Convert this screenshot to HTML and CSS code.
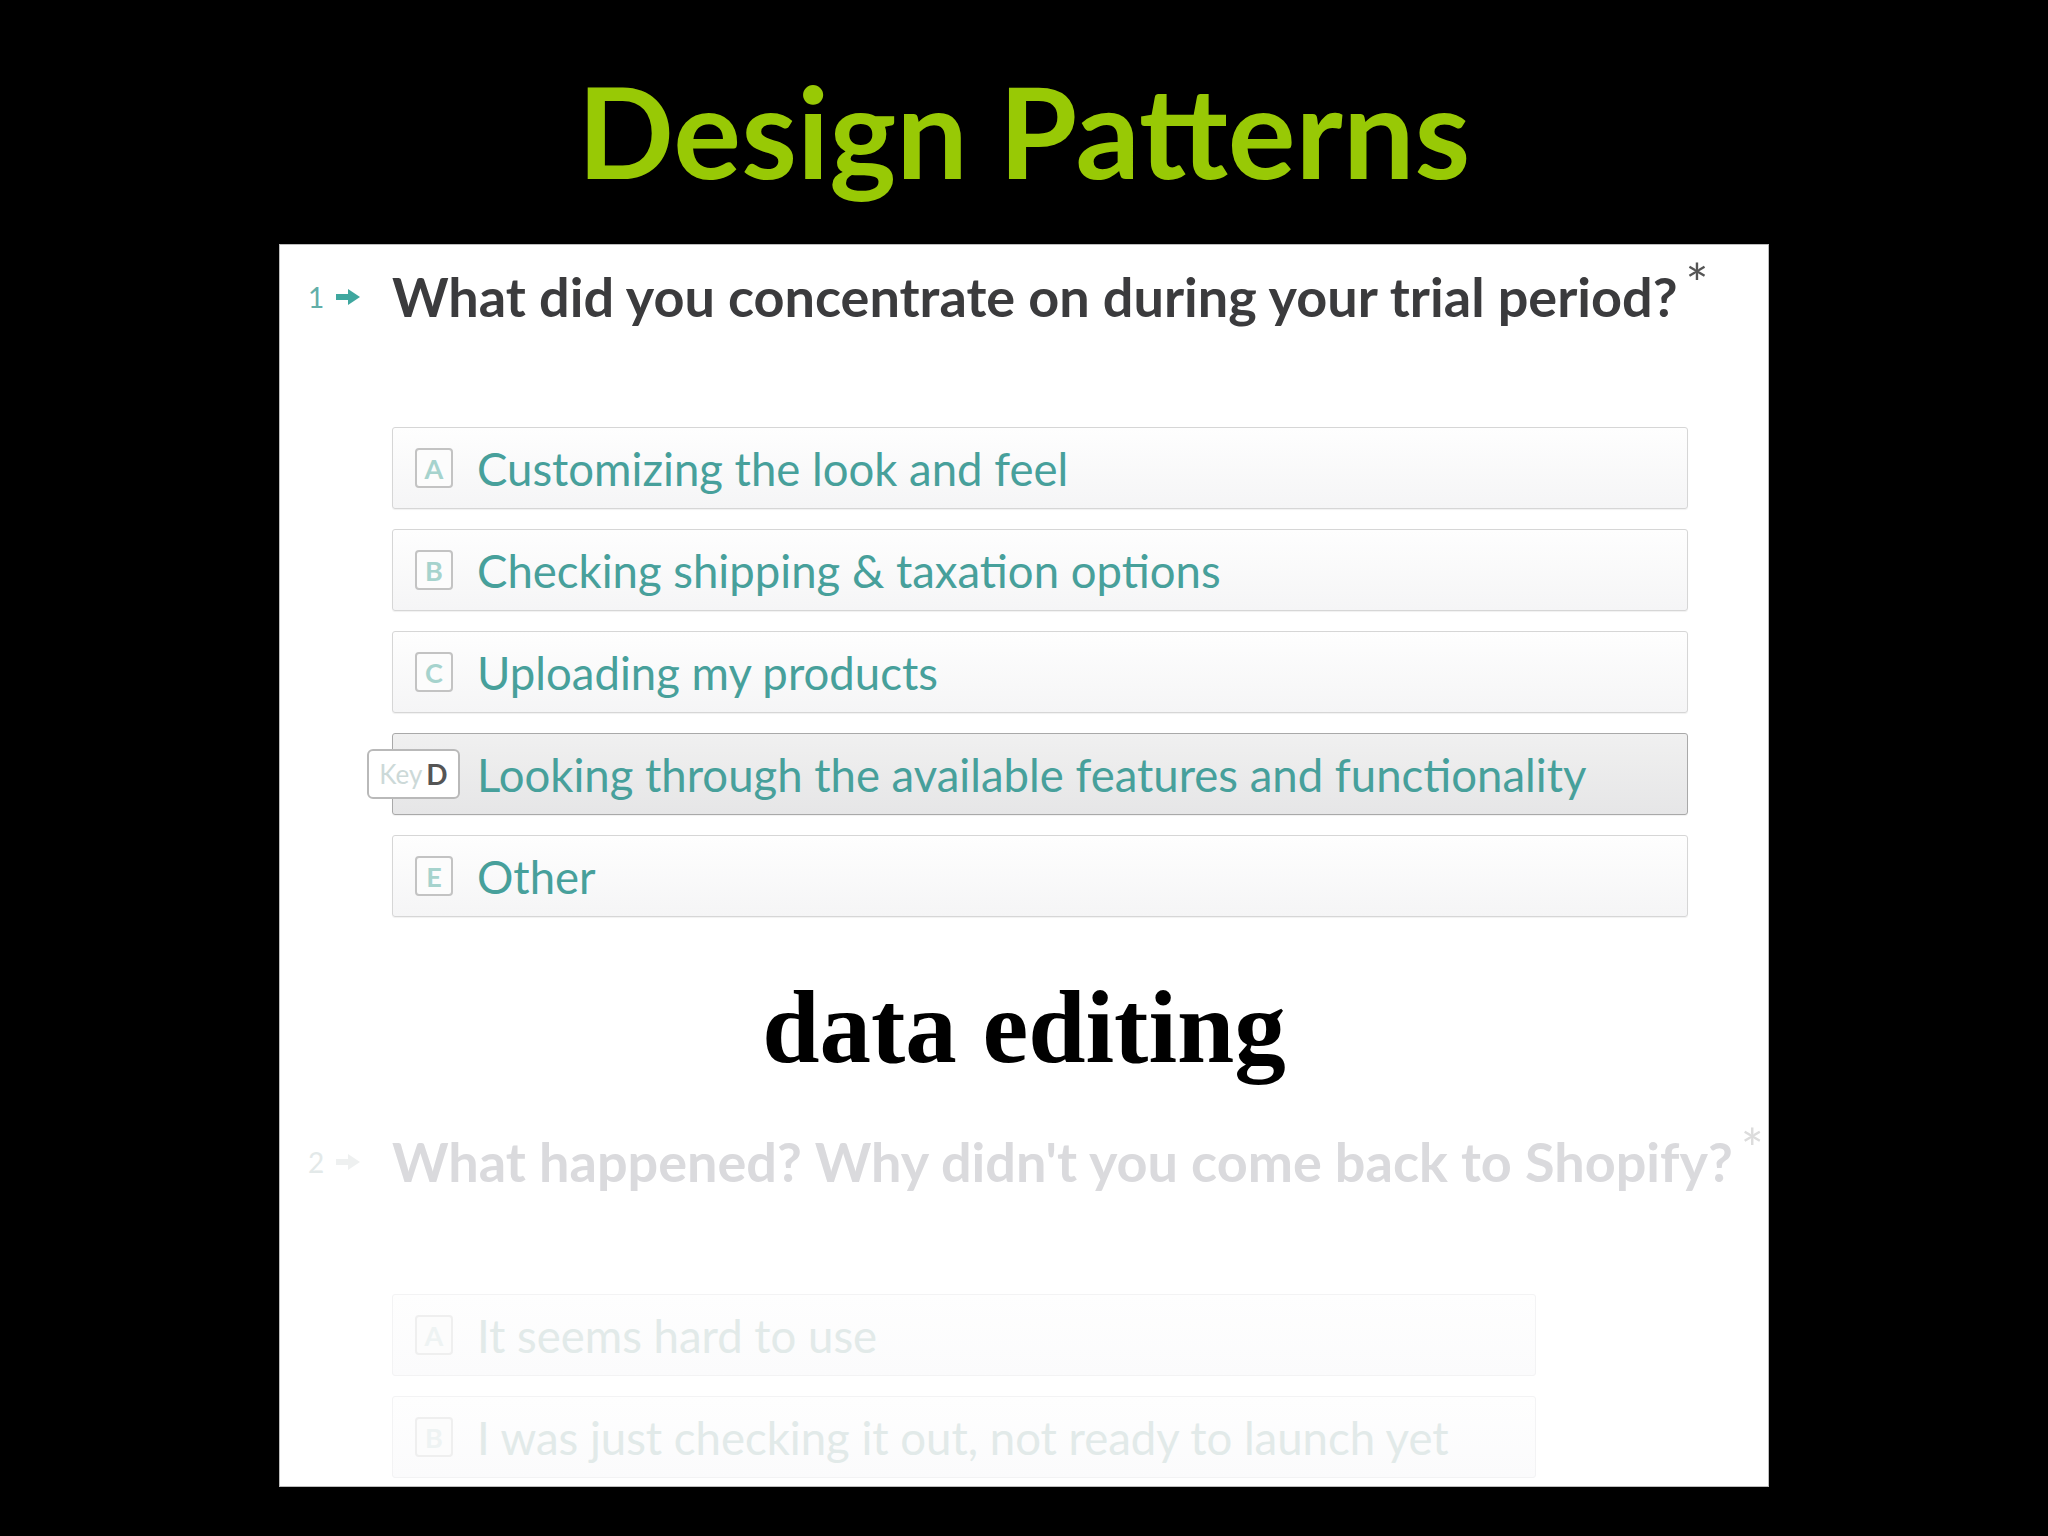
FILE: index.html
```html
<!DOCTYPE html>
<html lang="en">
<head>
<meta charset="utf-8">
<title>Design Patterns</title>
<link rel="stylesheet" href="styles.css">
</head>
<body>
<div class="slide">
  <h1 class="title">Design Patterns</h1>
  <div class="panel">
    <section class="question">
      <div class="q-head">
        <span class="q-num">1</span>
        <svg class="q-arrow" viewBox="0 0 24 16" width="24" height="16"><path d="M0 5h12V0l12 8-12 8v-5H0z"/></svg>
        <h2 class="q-text">What did you concentrate on during your trial period?<span class="req">*</span></h2>
      </div>
      <ul class="options options-wide">
        <li class="opt"><span class="key">A</span><span class="label">Customizing the look and feel</span></li>
        <li class="opt"><span class="key">B</span><span class="label">Checking shipping &amp; taxation options</span></li>
        <li class="opt"><span class="key">C</span><span class="label">Uploading my products</span></li>
        <li class="opt opt-active"><span class="key key-hint"><span class="key-word">Key</span><span class="key-letter">D</span></span><span class="label">Looking through the available features and functionality</span></li>
        <li class="opt"><span class="key">E</span><span class="label">Other</span></li>
      </ul>
    </section>
    <p class="caption">data editing</p>
    <section class="question faded">
      <div class="q-head">
        <span class="q-num">2</span>
        <svg class="q-arrow" viewBox="0 0 24 16" width="24" height="16"><path d="M0 5h12V0l12 8-12 8v-5H0z"/></svg>
        <h2 class="q-text">What happened? Why didn't you come back to Shopify?<span class="req">*</span></h2>
      </div>
      <ul class="options options-narrow">
        <li class="opt"><span class="key">A</span><span class="label">It seems hard to use</span></li>
        <li class="opt"><span class="key">B</span><span class="label">I was just checking it out, not ready to launch yet</span></li>
      </ul>
    </section>
  </div>
</div>
</body>
</html>
```

FILE: styles.css
```css
* { box-sizing: border-box; }

html, body {
  margin: 0;
  padding: 0;
  background: #000;
}

.slide {
  width: 2048px;
  height: 1536px;
  background: #000;
  display: flex;
  flex-direction: column;
  align-items: center;
  overflow: hidden;
}

.title {
  margin: 54px 0 0;
  font-family: Lato, "Open Sans", sans-serif;
  font-weight: 700;
  font-size: 127px;
  line-height: 152px;
  color: #98c905;
}

.panel {
  margin-top: 38px;
  width: 1490px;
  height: 1243px;
  background: #fff;
  border: 1px solid #bdbdbd;
  overflow: hidden;
  padding: 17px 0 0 28px;
  display: flex;
  flex-direction: column;
}

.question {
  display: flex;
  flex-direction: column;
}

.q-head {
  display: flex;
  align-items: center;
  height: 70px;
}

.q-num {
  flex: none;
  font-family: Lato, sans-serif;
  font-size: 28px;
  color: #62aea8;
  width: 28px;
}

.q-arrow {
  flex: none;
  width: 24px;
  height: 16px;
  fill: #3fa79f;
  margin-right: 32px;
}

.q-text {
  margin: 0;
  font-family: Lato, sans-serif;
  font-weight: 700;
  font-size: 54px;
  line-height: 70px;
  color: #3b3b3d;
  white-space: nowrap;
}

.req {
  font-weight: 400;
  font-size: 54px;
  color: #555;
  margin-left: 8px;
  position: relative;
  top: -14px;
}

.options {
  list-style: none;
  margin: 95px 0 0 84px;
  padding: 0;
  display: flex;
  flex-direction: column;
  gap: 20px;
}

.options-wide { width: 1296px; }
.options-narrow { width: 1144px; }

.opt {
  height: 82px;
  border: 1px solid #d6d6d6;
  border-radius: 3px;
  background: linear-gradient(#fefefe, #f5f5f6);
  box-shadow: 0 1px 1px rgba(0,0,0,0.06);
  display: flex;
  align-items: center;
  padding-left: 22px;
}

.opt-active {
  background: linear-gradient(#f0f0f0, #e6e6e7);
  border-color: #a9a9a9;
}

.key {
  width: 38px;
  height: 40px;
  flex: none;
  border: 2px solid #c3c3c3;
  border-radius: 4px;
  background: #fcfcfc;
  display: flex;
  align-items: center;
  justify-content: center;
  font-family: Lato, sans-serif;
  font-weight: 700;
  font-size: 27px;
  color: #a6d3cd;
  margin-right: 24px;
}

.key-hint {
  width: 93px;
  height: 50px;
  margin-left: -48px;
  margin-right: 17px;
  border: 2px solid #b9b9b9;
  border-radius: 6px;
  background: #fff;
  gap: 4px;
  font-weight: 400;
}

.key-word {
  font-size: 26px;
  color: #ccd9d8;
}

.key-letter {
  font-size: 28px;
  color: #555;
  font-weight: 700;
}

.label {
  font-family: Lato, sans-serif;
  font-size: 45.5px;
  color: #47a09b;
  white-space: nowrap;
}

.caption {
  margin: 53px 0 0 -28px;
  text-align: center;
  font-family: "Liberation Serif", "Times New Roman", serif;
  font-weight: 700;
  font-size: 103px;
  line-height: 115px;
  color: #000;
}

.faded .q-head { margin-top: 42px; }
.faded .options { margin-top: 97px; }
.faded .q-num { color: #e3e9e9; }
.faded .q-arrow { fill: #eef0f0; }
.faded .q-text { color: #dadadd; }
.faded .req { color: #dcdcdc; }
.faded .opt {
  border-color: #f3f3f4;
  background: linear-gradient(#fefefe, #fbfbfc);
  box-shadow: none;
}
.faded .key {
  border-color: #efefef;
  color: #eef3f3;
}
.faded .label { color: #e2eae9; }
```
